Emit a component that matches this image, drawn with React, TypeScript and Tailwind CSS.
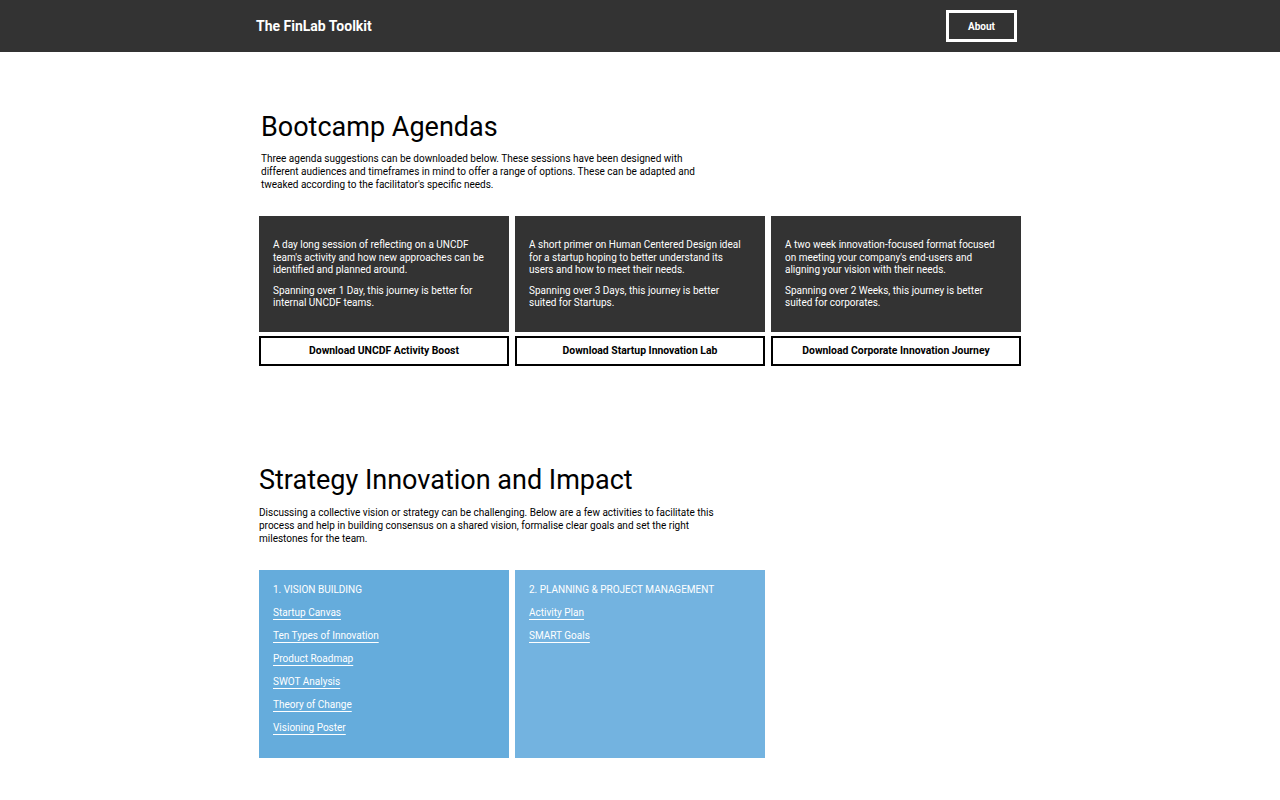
import React from "react";

const agendas = [
  {
    intro:
      "A day long session of reflecting on a UNCDF team's activity and how new approaches can be identified and planned around.",
    span: "Spanning over 1 Day, this journey is better for internal UNCDF teams.",
    cta: "Download UNCDF Activity Boost",
  },
  {
    intro:
      "A short primer on Human Centered Design ideal for a startup hoping to better understand its users and how to meet their needs.",
    span: "Spanning over 3 Days, this journey is better suited for Startups.",
    cta: "Download Startup Innovation Lab",
  },
  {
    intro:
      "A two week innovation-focused format focused on meeting your company's end-users and aligning your vision with their needs.",
    span: "Spanning over 2 Weeks, this journey is better suited for corporates.",
    cta: "Download Corporate Innovation Journey",
  },
];

const groups = [
  {
    title: "1. VISION BUILDING",
    bg: "bg-[#65acdc]",
    links: [
      "Startup Canvas",
      "Ten Types of Innovation",
      "Product Roadmap",
      "SWOT Analysis",
      "Theory of Change",
      "Visioning Poster",
    ],
  },
  {
    title: "2. PLANNING & PROJECT MANAGEMENT",
    bg: "bg-[#73b3e0]",
    links: ["Activity Plan", "SMART Goals"],
  },
];

export default function App() {
  return (
    <div className="min-h-screen bg-white text-black font-['Roboto',sans-serif]">
      {/* Top bar */}
      <header className="h-[52px] bg-[#333333]">
        <div className="mx-auto flex h-full w-[768px] items-center justify-between">
          <span className="mt-[1px] text-[14px] font-bold text-white">The FinLab Toolkit</span>
          <a className="mr-[7px] flex h-[32px] w-[71px] items-center justify-center border-[3px] border-white text-[10px] font-bold text-white">
            About
          </a>
        </div>
      </header>

      <main className="mx-auto w-[768px]">
        {/* Bootcamp agendas */}
        <section className="pt-[57px]">
          <h1 className="ml-[5px] text-[27px] leading-[36px] font-normal">Bootcamp Agendas</h1>
          <p className="ml-[5px] mt-[7px] w-[450px] text-[10px] leading-[13px]">
            Three agenda suggestions can be downloaded below. These sessions have been designed with different
            audiences and timeframes in mind to offer a range of options. These can be adapted and tweaked according
            to the facilitator's specific needs.
          </p>

          <div className="mx-[3px] mt-[25px] grid grid-cols-3 gap-[6px]">
            {agendas.map((a) => (
              <div key={a.cta} className="flex flex-col gap-[4px]">
                <div className="h-[116px] bg-[#333333] pl-[14px] pr-[22px] pt-[23px] text-[10px] leading-[12.5px] text-white">
                  <p>{a.intro}</p>
                  <p className="mt-[8px]">{a.span}</p>
                </div>
                <button className="h-[30px] border-2 border-black text-[10.4px] font-bold">
                  {a.cta}
                </button>
              </div>
            ))}
          </div>
        </section>

        {/* Strategy */}
        <section className="pt-[96px] pb-[40px]">
          <h2 className="ml-[3px] text-[27px] leading-[36px] font-normal">Strategy Innovation and Impact</h2>
          <p className="ml-[3px] mt-[8px] w-[462px] text-[10px] leading-[13px]">
            Discussing a collective vision or strategy can be challenging. Below are a few activities to facilitate
            this process and help in building consensus on a shared vision, formalise clear goals and set the right
            milestones for the team.
          </p>

          <div className="mx-[3px] mt-[25px] grid grid-cols-3 gap-[6px]">
            {groups.map((g) => (
              <div key={g.title} className={`h-[188px] ${g.bg} px-[14px] pt-[13px] text-[10px] text-white`}>
                <div className="leading-[13px]">{g.title}</div>
                <ul className="mt-[10px] flex flex-col gap-[10px]">
                  {g.links.map((l) => (
                    <li key={l} className="leading-[13px]">
                      <a className="underline underline-offset-[3px]">{l}</a>
                    </li>
                  ))}
                </ul>
              </div>
            ))}
          </div>
        </section>
      </main>
    </div>
  );
}
